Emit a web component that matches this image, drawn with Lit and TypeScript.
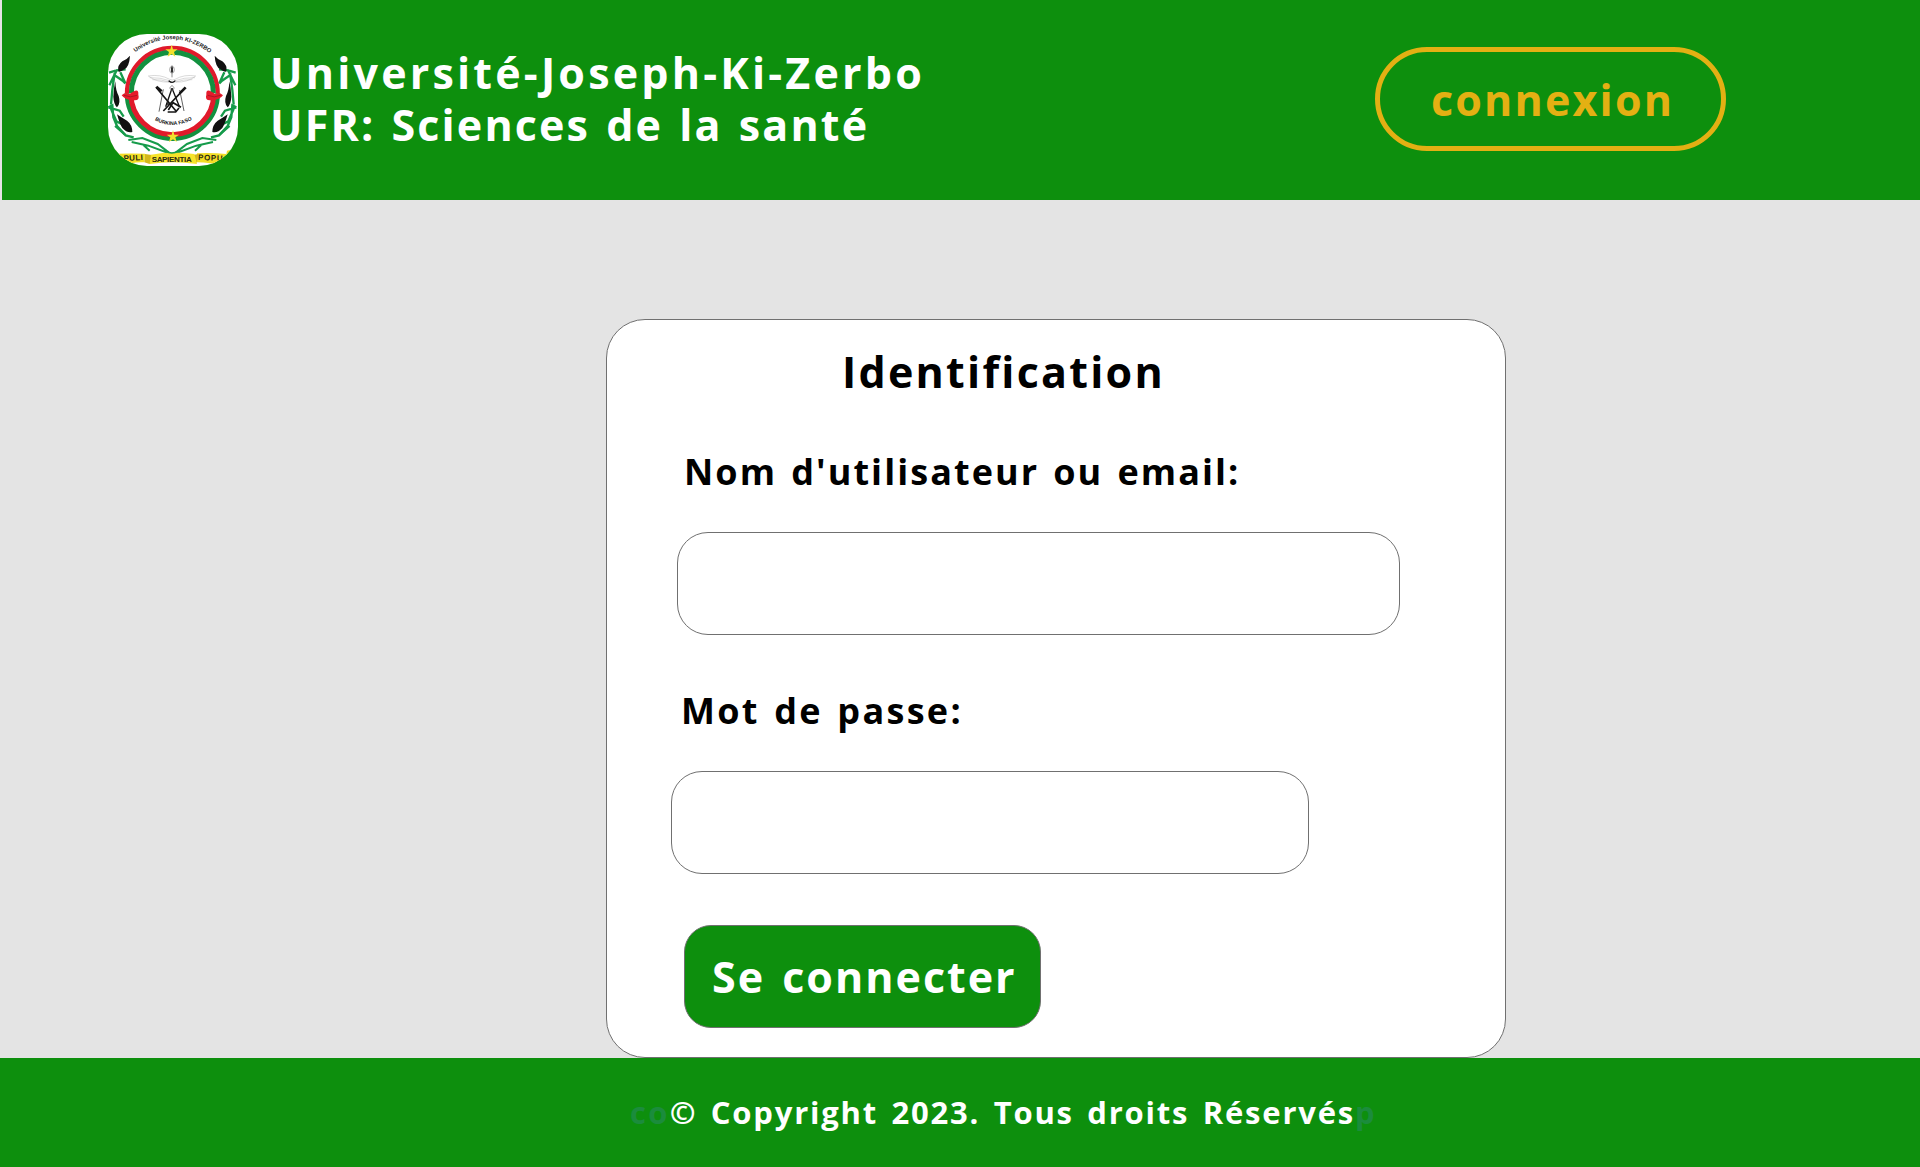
import { LitElement, html, svg, css } from "lit";
import { customElement } from "lit/decorators.js";

const laurel = svg`
  <g fill="none" stroke="#169b4b" stroke-width="7">
    <path d="M92 148 L65 151 L43 196 M62 152 L42 158 M76 157 L91 190 L83 182 L58 165 L52 210 L48 254" />
    <path d="M40 262 L52 256 L55 292 L66 318 L92 346 L116 352 M40 262 L74 272 L86 290 M46 262 L64 304 L80 312" />
    <path d="M100 360 L142 354 L188 372 L222 398 M110 366 L160 377 L228 402 M146 376 L164 392 M60 318 L90 344" stroke-width="6" />
  </g>
  <g fill="#111">
    <path d="M105 107 Q103 140 88 148 Q74 158 70 154 Q66 136 82 124 Q96 118 105 107Z" />
    <path d="M61 184 Q56 204 55 230 Q56 252 66 262 Q78 250 71 228 Q62 212 61 184Z" />
    <path d="M66 283 Q74 312 82 324 Q96 340 112 336 Q112 314 96 302 Q78 292 66 283Z" />
  </g>
`;

@customElement("university-logo")
export class UniversityLogo extends LitElement {
  static styles = css`
    :host { display: block; width: 130px; height: 132px; }
    .mark { display: block; width: 130px; height: 132px; border-radius: 39px; background: #fff; }
    .arc { font: 700 17.6px "Liberation Sans", Arial, sans-serif; fill: #222; }
    .country { font: 700 15.5px "Liberation Sans", Arial, sans-serif; fill: #111; }
    .motto { font: 700 24px "Liberation Sans", Arial, sans-serif; fill: #2b2a10; }
  `;

  render() {
    return html`
      <svg class="mark" viewBox="39 42 390 396" role="img" aria-label="Logo">
        <defs>
          <path id="top-arc" d="M121 97 Q232 14 352 105" />
          <path id="low-arc" d="M179 300 Q236 334 304 292" />
        </defs>
        <g fill="none">
          <path d="M96 220 A136 136 0 0 1 368 220" stroke="#e01a2b" stroke-width="13" />
          <path d="M109 220 A123 123 0 0 1 355 220" stroke="#12913f" stroke-width="15" />
          <path d="M96 220 A136 136 0 0 0 368 220" stroke="#12913f" stroke-width="14" />
          <path d="M108 222 A124 122 0 0 0 356 222" stroke="#e01a2b" stroke-width="15" />
        </g>
        <path d="M80 226 Q92 214 104 222 Q132 200 130 224 Q136 244 112 240 Q90 240 80 226Z M384 226 Q372 214 360 222 Q332 200 334 224 Q328 244 352 240 Q374 240 384 226Z" fill="#e61c2c" />
        <path d="M87 226 Q106 235 126 226 M377 226 Q358 235 338 226" fill="none" stroke="#8e1420" stroke-width="2" />
        <g>${laurel}</g>
        <g transform="translate(464 0) scale(-1 1)">${laurel}</g>
        <g fill="#f2e02c">
          <path d="M230 74 L234 88 L248 88 L237 96 L241 110 L230 102 L218 110 L222 96 L211 88 L226 88Z" />
          <path d="M234 330 L238 344 L252 344 L241 352 L245 366 L234 358 L222 366 L226 352 L215 344 L230 344Z" />
        </g>
        <g fill="none" stroke="#b5b5b5" stroke-width="1.5">
          <path d="M160 168 Q196 162 224 178 Q232 182 240 178 Q268 162 302 168 M164 173 Q196 172 224 182 M300 173 Q268 172 240 182 M172 179 Q200 178 222 186 M292 179 Q264 178 242 186" />
          <path d="M160 168 Q186 188 222 186 M302 168 Q278 188 242 186" />
        </g>
        <g fill="none" stroke="#151515">
          <path d="M221 182 Q232 192 241 182" stroke-width="4" />
          <ellipse cx="231" cy="149" rx="7" ry="10" stroke="#777" stroke-width="2" />
          <path d="M231 142 V157" stroke-width="5" />
          <path d="M231 136 V172" stroke-width="1.5" />
          <path d="M183 202 L243 273 M269 205 L205 273" stroke-width="5" />
          <path d="M184 200 L200 214 M272 202 L254 220" stroke-width="8" />
          <path d="M205 208 L192 275 M254 210 L267 273" stroke-width="2" />
          <path d="M231 205 L212 260 M231 205 L254 262" stroke-width="4" />
          <path d="M220 270 L234 248 L258 262 M213 252 H232 M218 276 H242 L252 264" stroke-width="5" />
          <path d="M231 196 L224 204 L231 212 L238 204Z" stroke-width="2" stroke="#666" />
        </g>
        <path d="M37 387 Q50 386 64 392 L66 401 Q110 400 150 401 L148 427 Q110 425 84 438 H37Z" fill="#f3dd24" />
        <path d="M429 387 Q414 386 396 392 L394 402 Q350 398 306 400 L304 427 Q350 427 380 438 H429Z" fill="#f3dd24" />
        <path d="M150 402 L176 406 L164 432 L148 427Z M310 402 L290 406 L300 430 L306 427Z" fill="#d3b81b" />
        <path d="M168 404 Q232 392 298 402 L306 432 Q232 422 164 432Z" fill="#f7e32a" />
        <path d="M212 394 Q230 404 250 394" fill="none" stroke="#169b4b" stroke-width="5" />
        <text class="arc"><textPath href="#top-arc">Université Joseph KI-ZERBO</textPath></text>
        <text class="country"><textPath href="#low-arc">BURKINA FASO</textPath></text>
        <text class="motto" x="86" y="423" textLength="58" transform="rotate(-3 86 423)">PULI</text>
        <text class="motto" x="170" y="427" textLength="120">SAPIENTIA</text>
        <text class="motto" x="309" y="420" textLength="74" transform="rotate(2 309 420)">POPU</text>
      </svg>
    `;
  }
}

@customElement("app-root")
export class AppRoot extends LitElement {
  static styles = css`
    :host { display: block; font-family: "Open Sans", "Noto Sans", sans-serif; }
    * { box-sizing: border-box; }
    .page { display: flex; flex-direction: column; width: 1920px; height: 1167px; overflow: hidden; background: #e4e4e4; }
    .header { display: flex; align-items: flex-start; height: 200px; margin-left: 2px; background: #0d8f0d; color: #fff; }
    .logo { margin: 34px 0 0 106px; }
    .title { margin: 47px 0 0 32px; width: 680px; font-size: 43px; line-height: 52px; font-weight: 700; white-space: nowrap; }
    .university { letter-spacing: 3.2px; }
    .faculty { letter-spacing: 2.15px; word-spacing: 2.8px; }
    .login { margin: 47px 0 0 425px; width: 351px; height: 104px; padding: 2px 0 0 51px; border: 5px solid #e3b013; border-radius: 52px; background: none; color: #e3b013; font: inherit; font-weight: 700; font-size: 43px; line-height: 92px; letter-spacing: 2.18px; text-align: left; }
    .main { display: flex; justify-content: flex-start; flex: 1; padding: 119px 0 0 606px; }
    .card { display: flex; flex-direction: column; align-items: flex-start; width: 900px; height: 739px; padding: 22px 0 0 64px; border: 1px solid #707070; border-radius: 39px; background: #fff; color: #000; }
    .heading { margin: 0 0 0 171px; font-size: 43px; line-height: 60px; font-weight: 700; letter-spacing: 2.25px; }
    .label { font-size: 36px; line-height: 50px; font-weight: 700; white-space: nowrap; }
    .user-label { margin: 45px 0 0 13px; letter-spacing: 2.05px; word-spacing: 2.8px; }
    .pass-label { margin: 51px 0 0 10px; letter-spacing: 2.3px; word-spacing: 2.8px; }
    .field { height: 103px; padding: 0 28px; border: 1px solid #707070; border-radius: 31px; background: #fff; font: inherit; font-size: 32px; outline: none; }
    .user { width: 723px; margin: 35px 0 0 6px; }
    .pass { width: 638px; margin: 35px 0 0 0; }
    .submit { width: 357px; height: 103px; margin: 51px 0 0 13px; padding: 1px 0 0 27px; border: 1px solid #707070; border-radius: 27px; background: #0d8f0d; color: #fff; font: inherit; font-size: 43px; font-weight: 700; letter-spacing: 2px; word-spacing: 4px; text-align: left; line-height: 100px; }
    .footer { display: flex; align-items: center; height: 109px; padding: 0 0 2px 630px; background: #0d8f0d; color: #fff; font-size: 31px; line-height: 42px; font-weight: 700; white-space: nowrap; letter-spacing: 2.28px; }
    .copyright { letter-spacing: 1.8px; word-spacing: 3.6px; }
    .ghost { color: #1b8c3c; }
  `;

  render() {
    return html`
      <div class="page">
        <header class="header">
          <university-logo class="logo"></university-logo>
          <div class="title">
            <div class="university">Université-Joseph-Ki-Zerbo</div>
            <div class="faculty">UFR: Sciences de la santé</div>
          </div>
          <button class="login">connexion</button>
        </header>
        <main class="main">
          <form class="card">
            <h1 class="heading">Identification</h1>
            <label class="label user-label" for="user">Nom d'utilisateur ou email:</label>
            <input class="field user" id="user" type="text" />
            <label class="label pass-label" for="pass">Mot de passe:</label>
            <input class="field pass" id="pass" type="password" />
            <button class="submit" type="button">Se connecter</button>
          </form>
        </main>
        <footer class="footer">
          <span class="ghost">co</span><span class="copyright">© Copyright 2023. Tous droits Réservés</span><span class="ghost">p</span>
        </footer>
      </div>
    `;
  }
}
